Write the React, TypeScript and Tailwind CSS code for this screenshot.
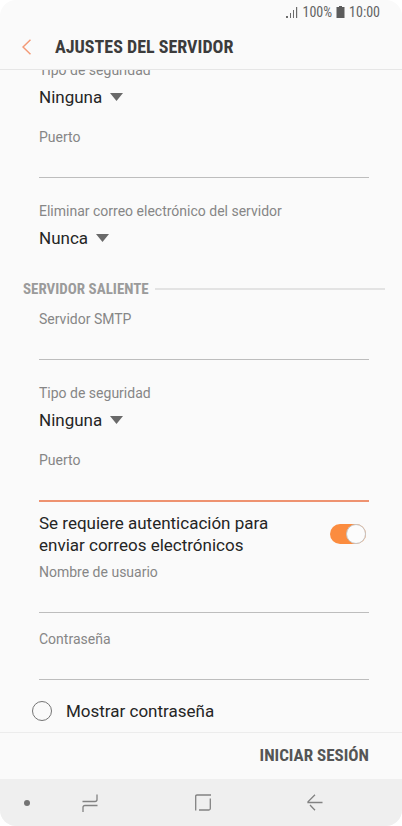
import React, { useState } from 'react';

const Field: React.FC<{
  id: string;
  label: string;
  type?: string;
  active?: boolean;
}> = ({ id, label, type = 'text', active = false }) => (
  <div className="flex flex-col">
    <label htmlFor={id} className="text-sm leading-5 text-[#868686]">
      {label}
    </label>
    <input
      id={id}
      type={type}
      className={
        active
          ? 'h-8 w-full border-b-2 border-[#ee9270] bg-transparent text-[17px] text-[#252525] outline-none'
          : 'h-[31px] w-full border-b border-[#bdbdbd] bg-transparent text-[17px] text-[#252525] outline-none'
      }
    />
  </div>
);

const SelectField: React.FC<{
  id: string;
  label: string;
  options: string[];
}> = ({ id, label, options }) => (
  <div className="flex flex-col">
    <label htmlFor={id} className="text-sm leading-5 text-[#868686]">
      {label}
    </label>
    <div className="flex h-[34px] items-center gap-2">
      <select
        id={id}
        className="field-sizing-content appearance-none bg-transparent text-[17px] leading-6 text-[#252525] outline-none"
      >
        {options.map((option) => (
          <option key={option}>{option}</option>
        ))}
      </select>
      <svg width="13" height="8" viewBox="0 0 13 8" fill="#696969" aria-hidden="true">
        <path d="M0 0h13L6.5 8z" />
      </svg>
    </div>
  </div>
);

const StatusBar: React.FC = () => (
  <div className="flex h-6 items-center justify-end gap-1 pr-[22px] text-sm text-[#636363]">
    <svg width="12" height="12" viewBox="0 0 12 12" fill="#6b6b6b" aria-hidden="true">
      <path d="M0 10h2v2H0zM4 7h1v5H4zM7 4h1v8H7zM10 1h1.200v11H10z" />
    </svg>
    <span className="font-['Roboto_Condensed',Roboto,sans-serif]">100%</span>
    <svg width="9" height="12" viewBox="0 0 9 12" fill="#5c5c5c" aria-hidden="true">
      <path d="M3 0h3v1h2.500v11h-8V1H3z" />
    </svg>
    <span className="font-['Roboto_Condensed',Roboto,sans-serif]">10:00</span>
  </div>
);

const NavBar: React.FC = () => (
  <nav className="grid h-[47px] grid-cols-[54px_72px_1fr_72px_51px] place-items-center bg-[#efefef]">
    <button aria-label="Ocultar barra">
      <svg width="6" height="6" viewBox="0 0 6 6" fill="#747474">
        <circle cx="3" cy="3" r="3" />
      </svg>
    </button>
    <button aria-label="Recientes">
      <svg width="16" height="18" viewBox="0 0 16 18" fill="none" stroke="#828282" strokeWidth="1.300">
        <path d="M0.500 7.500H13q2 0 2-2V0.500M15.500 11.500H3q-2 0-2 2v4.500" />
      </svg>
    </button>
    <button aria-label="Inicio">
      <svg width="16" height="17" viewBox="0 0 16 17" fill="none" stroke="#828282" strokeWidth="1.300">
        <path d="M16 1H2Q0.700 1 0.700 2.300V16.500M15.300 4.500V14.500q0 1.500-1.500 1.500H4" />
      </svg>
    </button>
    <button aria-label="Atrás">
      <svg width="16" height="17" viewBox="0 0 16 17" fill="none" stroke="#828282" strokeWidth="1.300">
        <path d="M8 0.700L1 7.700V8.500H15.500M3 11L8 16.300" />
      </svg>
    </button>
  </nav>
);

const App: React.FC = () => {
  const [authRequired, setAuthRequired] = useState(true);

  return (
    <div className="bg-white font-[Roboto,sans-serif]">
      <div className="flex min-h-screen flex-col overflow-hidden rounded-2xl bg-[#fafafa]">
        <StatusBar />

        {/* CABECERA */}
        <header className="flex h-[46px] items-center gap-6 border-b border-[#e6e6e6] pl-[22px]">
          <button aria-label="Volver">
            <svg width="9" height="16" viewBox="0 0 9 16" fill="none" stroke="#f39a77" strokeWidth="1.500">
              <path d="M8.500 0.700L1 8l7.500 7.300" />
            </svg>
          </button>
          <h1 className="font-['Roboto_Condensed',Roboto,sans-serif] text-lg font-bold text-[#3c3c3c]">
            AJUSTES DEL SERVIDOR
          </h1>
        </header>

        {/* FORMULARIO */}
        <main className="flex-1 overflow-hidden">
          <div className="-mt-2.5 flex flex-col pr-[33px] pl-[39px]">
            <SelectField id="in-security" label="Tipo de seguridad" options={['Ninguna', 'SSL', 'TLS']} />
            <div className="mt-[13px]">
              <Field id="in-port" label="Puerto" />
            </div>
            <div className="mt-[23px]">
              <SelectField
                id="delete-mail"
                label="Eliminar correo electrónico del servidor"
                options={['Nunca', 'Al eliminar']}
              />
            </div>

            <div className="mt-6 -mr-4 -ml-4 flex items-center gap-1.5">
              <h2 className="font-['Roboto_Condensed',Roboto,sans-serif] text-[15px] leading-5 font-bold text-[#9b9b9b]">
                SERVIDOR SALIENTE
              </h2>
              <div className="h-0.5 flex-1 bg-[#e3e3e3]" />
            </div>

            <div className="mt-2.5">
              <Field id="smtp" label="Servidor SMTP" />
            </div>
            <div className="mt-[23px]">
              <SelectField id="out-security" label="Tipo de seguridad" options={['Ninguna', 'SSL', 'TLS']} />
            </div>
            <div className="mt-[13px]">
              <Field id="out-port" label="Puerto" active />
            </div>

            <label className="mt-2.5 flex items-center justify-between gap-4 text-[17px] leading-[22px] text-[#252525]">
              <span className="max-w-[240px]">Se requiere autenticación para enviar correos electrónicos</span>
              <input
                type="checkbox"
                role="switch"
                checked={authRequired}
                onChange={() => setAuthRequired(!authRequired)}
                className="mr-[3px] flex h-5 w-9 shrink-0 appearance-none items-center rounded-full bg-[#cfcfcf] before:size-5 before:rounded-full before:border before:border-[#c4c4c4] before:bg-[#fcfcfc] checked:justify-end checked:bg-[#fb8c3f]"
              />
            </label>

            <div className="mt-1.5">
              <Field id="user" label="Nombre de usuario" />
            </div>
            <div className="mt-4">
              <Field id="password" label="Contraseña" type="password" />
            </div>

            <label className="mt-5 -ml-[7px] flex items-center gap-3.5 text-[17px] leading-[22px] text-[#252525]">
              <input
                type="checkbox"
                className="size-5 appearance-none rounded-full border border-[#747474] checked:bg-[#fb8c3f]"
              />
              Mostrar contraseña
            </label>
          </div>
        </main>

        {/* ACCIONES */}
        <footer className="flex h-[47px] items-center justify-end border-t border-[#ececec] pr-[33px]">
          <button className="font-['Roboto_Condensed',Roboto,sans-serif] text-[17px] font-bold text-[#555555]">
            INICIAR SESIÓN
          </button>
        </footer>

        <NavBar />
      </div>
    </div>
  );
};

export default App;
